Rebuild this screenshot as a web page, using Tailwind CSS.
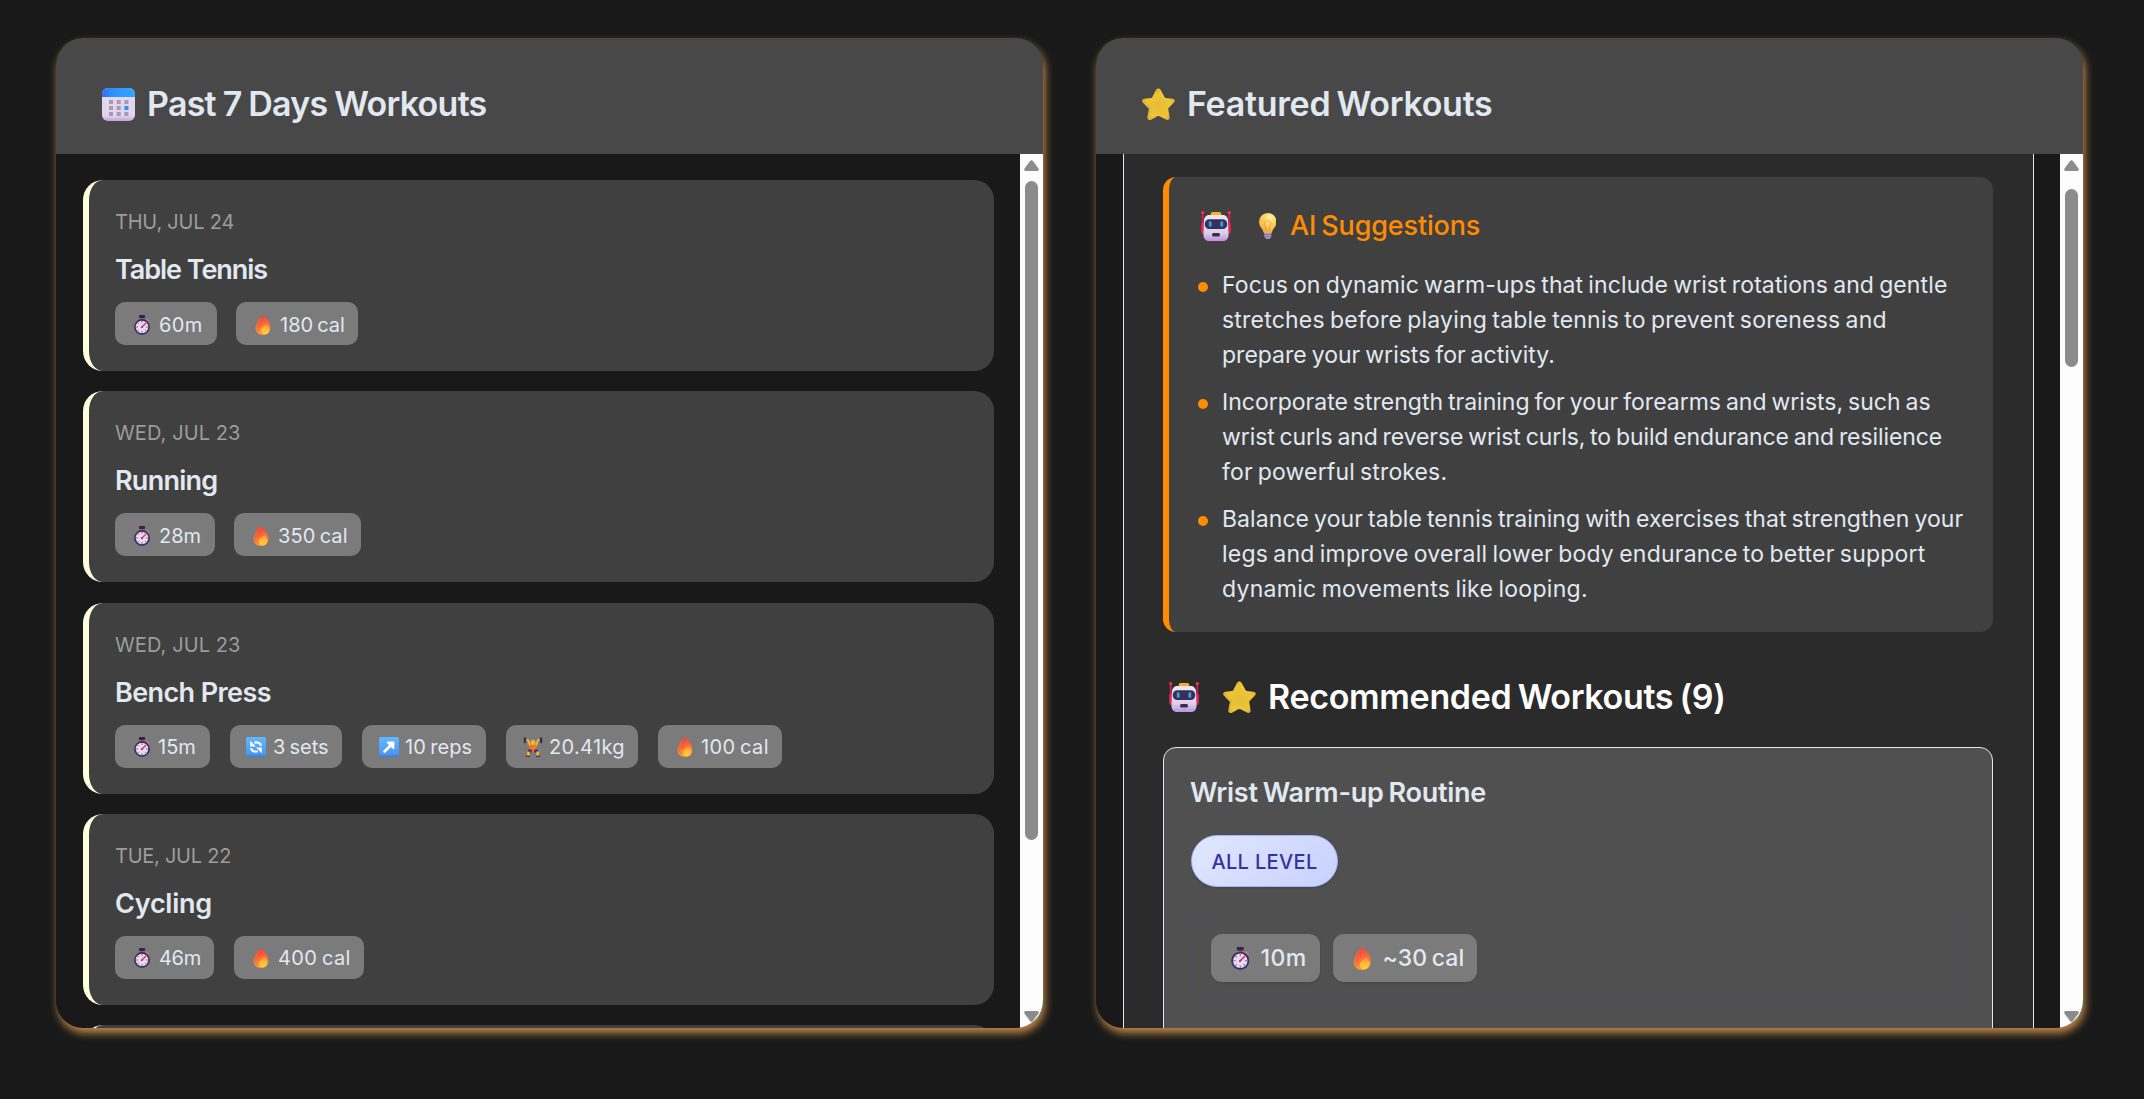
<!DOCTYPE html>
<html lang="en">
<head>
<meta charset="utf-8">
<title>Workouts</title>
<script src="https://cdn.jsdelivr.net/npm/@tailwindcss/browser@4"></script>
</head>
<body class="h-[1099px] w-[2144px] overflow-hidden bg-[#191919] font-['Inter',sans-serif] text-slate-200">

<!-- icon sprite -->
<svg class="absolute size-0" aria-hidden="true">
  <defs>
    <linearGradient id="calTop" x1="0" x2="1" y1="0" y2="0"><stop offset="0" stop-color="#2f6df0"/><stop offset=".3" stop-color="#3190ff"/><stop offset="1" stop-color="#31a5ff"/></linearGradient>
    <linearGradient id="calBody" x1="0" x2="0" y1="0" y2="1"><stop offset="0" stop-color="#e3daec"/><stop offset=".85" stop-color="#e2d3ee"/><stop offset="1" stop-color="#c2a0dc"/></linearGradient>
    <radialGradient id="starFill" cx=".5" cy=".55" r=".55"><stop offset="0" stop-color="#e2be38"/><stop offset=".7" stop-color="#efc536"/><stop offset="1" stop-color="#dda52f"/></radialGradient>
    <linearGradient id="botHead" x1="0" x2="0" y1="0" y2="1"><stop offset="0" stop-color="#eee6f4"/><stop offset=".7" stop-color="#dccfe8"/><stop offset="1" stop-color="#bb92dd"/></linearGradient>
    <radialGradient id="bulbFill" cx=".62" cy=".25" r=".75"><stop offset="0" stop-color="#fff6c4"/><stop offset=".35" stop-color="#ffdc68"/><stop offset="1" stop-color="#f5a742"/></radialGradient>
    <linearGradient id="flameOut" x1="0" x2="0" y1="0" y2="1"><stop offset="0" stop-color="#f5413f"/><stop offset=".5" stop-color="#f9713c"/><stop offset="1" stop-color="#ff9a36"/></linearGradient>
    <linearGradient id="flameIn" x1="0" x2="0" y1="0" y2="1"><stop offset="0" stop-color="#ff8a38"/><stop offset=".5" stop-color="#ffb536"/><stop offset="1" stop-color="#ffd23a"/></linearGradient>
    <linearGradient id="tile" x1="0" x2="0" y1="0" y2="1"><stop offset="0" stop-color="#62b8ff"/><stop offset=".85" stop-color="#4c97f2"/><stop offset="1" stop-color="#3f78d8"/></linearGradient>
    <linearGradient id="rim" x1="0" x2="0" y1="0" y2="1"><stop offset="0" stop-color="#4f2450"/><stop offset="1" stop-color="#35336c"/></linearGradient>
  </defs>
  <symbol id="calendar" viewBox="0 0 33 33">
    <rect width="33" height="33" rx="6" fill="url(#calBody)"/>
    <path d="M0 9V6a6 6 0 0 1 6-6h21a6 6 0 0 1 6 6v3z" fill="url(#calTop)"/>
    <path d="M7 12h4v4H7zM14.700 12h4v4h-4zM22.400 12h4v4h-4zM7 18h4v4H7zM14.700 18h4v4h-4zM7 24h4v4H7zM14.700 24h4v4h-4zM22.400 24h4v4h-4z" fill="#a79ab3"/>
    <path d="M22.400 18h4v4h-4z" fill="#2f93f5"/>
  </symbol>
  <symbol id="star" viewBox="0 0 33 33">
    <path d="M14 1.700q2.300-3 4.600 0l3.800 7.200q.4.800 1.300 1l7.200.9q3 .9 1.300 3.500l-5.400 5.500q-.7.700-.5 1.700l1.300 7.700q0 3.500-3.200 2.600l-6.900-3.500q-1.200-.5-2.300 0l-6.500 3.600q-3.400.9-3.400-2.600l1.500-7.700q.2-1-.6-1.700L.7 14.400q-1.600-2.700 1.300-3.600l7-.9q1-.2 1.400-1z" fill="url(#starFill)"/>
    <path d="M16.300 1.500q1.200 0 1.900 1.300l3.500 6.800q.6.900 1.700 1.200" fill="none" stroke="#f8d85a" stroke-width="1" stroke-linecap="round" opacity=".8"/>
    <path d="M2 13.500l5.500 5.200q.8.900.6 2.100L6.700 29" fill="none" stroke="#c98f25" stroke-width="1" stroke-linecap="round" opacity=".55"/>
  </symbol>
  <symbol id="robot" viewBox="0 0 30 30">
    <path d="M1.700 1.500v14M28.300 1.500v14" stroke="#d81e55" stroke-width="1.700"/>
    <circle cx="1.700" cy="1.600" r="1.600" fill="#f5305f"/><circle cx="28.300" cy="1.600" r="1.600" fill="#f5305f"/>
    <rect x=".2" y="11.500" width="5" height="11.500" rx="2.200" fill="#dc2a5e"/><rect x="24.800" y="11.500" width="5" height="11.500" rx="2.200" fill="#dc2a5e"/>
    <rect x="9.700" y="1" width="10.600" height="5" rx="1.800" fill="#f7b31e"/>
    <path d="M8 4h14c3 0 4.800 2.500 5 5.500l.5 14c0 4-2 6.500-5.500 6.500H8c-3.500 0-5.500-2.500-5.500-6.500L3 9.500C3.200 6.500 5 4 8 4z" fill="url(#botHead)"/>
    <rect x="3.800" y="8.200" width="22.400" height="9.800" rx="4.600" fill="#3c2f57"/>
    <rect x="7.800" y="10.200" width="2.800" height="5.800" rx="1.400" fill="#1fa5f5"/><rect x="19.400" y="10.200" width="2.800" height="5.800" rx="1.400" fill="#1fa5f5"/>
    <rect x="11" y="22" width="8" height="3.500" rx="1.500" fill="#392b51"/>
  </symbol>
  <symbol id="bulb" viewBox="0 0 17.500 26">
    <path d="M5.300 18h7v5.500q-.8 2.500-3.500 2.500t-3.500-2.500z" fill="#b3a2c4"/>
    <path d="M8.750 0a8.700 8.700 0 0 1 8.700 8.800c0 3.500-1.600 5.300-3 7.200-.8 1.200-1 2.100-1.300 3-.2.700-.6 1-1.300 1H5.600c-.7 0-1.100-.3-1.300-1-.3-.9-.5-1.800-1.300-3C1.600 14.100 0 12.300 0 8.800A8.750 8.750 0 0 1 8.750 0z" fill="url(#bulbFill)"/>
    <path d="M7.300 18.500l-1-5.300A3.300 3.300 0 1 1 11 13.200l-1 5.300" fill="none" stroke="#f0932e" stroke-width=".9"/>
    <path d="M5.300 21.500h7M5.700 23.600h6" stroke="#75608d" stroke-width=".8"/>
  </symbol>
  <symbol id="timer" viewBox="0 0 16 20">
    <rect x="7" y="2" width="2" height="4" fill="#6a5a7c"/>
    <rect x="5" y="0" width="6" height="3" rx=".7" fill="#3a1f4c"/>
    <path d="M13 4.300l1.600 1.700" stroke="#9b8aa8" stroke-width="1.400" stroke-linecap="round"/>
    <circle cx="8" cy="12" r="7.100" fill="#e6dcef" stroke="url(#rim)" stroke-width="1.700"/>
    <path d="M8 6v2M8 16v2M2 12h2M12 12h2M3.800 7.800l1.300 1.300M10.900 14.900l1.300 1.300M3.800 16.200l1.300-1.300" stroke="#7d6c90" stroke-width=".9"/>
    <path d="M7.600 12.400L11.700 8.200" stroke="#ee2f68" stroke-width="1.500" stroke-linecap="round"/>
    <circle cx="8" cy="12" r="1" fill="#b3356b"/>
  </symbol>
  <symbol id="fire" viewBox="0 0 16 20">
    <path d="M8.800 0C7.200.8 6 2 5.300 3.600 5.200 3 5.300 2.600 5.400 2 3.500 3.600 2.700 5.400 2.700 7.200 1.300 8.600.6 11 .6 13.300.6 17.300 3.800 20 8 20s7.400-2.800 7.400-7c0-3-.8-5.600-2.300-7.600C11.800 3.600 9.800 2.600 8.800 0z" fill="url(#flameOut)"/>
    <path d="M3 9C2 11.500 2 14 3.500 17M5.700 5C4.300 7.500 4 10 4.500 13M8 3C6.500 5.500 6.300 8 6.800 10" fill="none" stroke="#d9482e" stroke-width=".6" opacity=".7"/>
    <path d="M11.300 8c-.2 2-2 2.600-3.700 4.200-1.200 1-1.900 2.300-1.700 3.900.2 1.900 1.600 3.300 3.600 3.300 3 0 5-2.100 5-5.400 0-2.600-2.500-3.600-3.200-6z" fill="url(#flameIn)"/>
  </symbol>
  <symbol id="sets" viewBox="0 0 20 20">
    <rect width="20" height="20" rx="1.800" fill="url(#tile)"/>
    <path d="M15 8.800C14.500 5.800 11 4.800 8.300 5.800M5 11.200c.5 3 4 4 6.700 3" fill="none" stroke="#fff" stroke-width="2.200"/>
    <path d="M4.200 3.800v5.700h5.700zM15.800 16.200v-5.700h-5.700z" fill="#fff"/>
  </symbol>
  <symbol id="reps" viewBox="0 0 20 20">
    <rect width="20" height="20" rx="1.800" fill="url(#tile)"/>
    <path d="M5.500 14.500L12 8" stroke="#fff" stroke-width="2.800" stroke-linecap="round"/>
    <path d="M8.500 4.600h5.900q1 0 1 1v5.900q-.2 1.300-1.300.5L8 6q-.8-1.100.5-1.400z" fill="#fff"/>
  </symbol>
  <symbol id="lifter" viewBox="0 0 20 20">
    <path d="M1 3h18" stroke="#8d8796" stroke-width=".8"/>
    <rect x=".8" y=".2" width="2.200" height="6" rx="1" fill="#3b3050"/><rect x="17" y=".2" width="2.200" height="6" rx="1" fill="#3b3050"/>
    <path d="M4.800 3L7 8.500M15.200 3L13 8.500" stroke="#f8b820" stroke-width="2" stroke-linecap="round"/>
    <circle cx="10" cy="5.600" r="2.600" fill="#f9b024"/>
    <path d="M6.300 8.200h7.400l-.8 6H7.100z" fill="#f7702c"/>
    <path d="M5.200 12.500h3.600l-.3 3H4.700zM14.800 12.500h-3.600l.3 3h3.800z" fill="#4b2a63"/>
    <rect x="4.200" y="14.500" width="2.300" height="4" fill="#fcc81f"/><rect x="13.500" y="14.500" width="2.300" height="4" fill="#fcc81f"/>
    <path d="M3 19.400h3.700M13.300 19.400H17" stroke="#4b2a63" stroke-width="1.300"/>
  </symbol>
  <symbol id="arrow" viewBox="0 0 15 11">
    <path d="M6 1q1.500-1.700 3 0l5.500 7.600Q15.500 11 13 11H2Q-.5 11 .5 8.600z" fill="#8b8b8b"/>
  </symbol>
</svg>

<main class="flex gap-[53px] pt-[38px] pl-[56px]">

  <!-- history -->
  <section class="flex h-[990px] w-[987px] flex-col overflow-hidden rounded-[27px] bg-[#191919] shadow-[2px_5px_8px_rgba(255,180,92,0.72)]">
    <header class="flex h-[116px] shrink-0 items-center gap-[12px] bg-[#484848] pt-[16px] pl-[46px]">
      <svg class="size-[33px]"><use href="#calendar"/></svg>
      <h2 class="pb-[2px] text-[34px] font-semibold tracking-[-0.75px] whitespace-nowrap [word-spacing:-1px]">Past 7 Days Workouts</h2>
    </header>
    <div class="flex min-h-0 flex-1">
      <div class="flex flex-1 flex-col gap-[20.3px] overflow-hidden pt-[26px] pr-[26px] pl-[27px]">
        <article class="h-[191px] shrink-0 rounded-[20px] border-l-6 border-[#ffffe0] bg-[#404040] pt-[26px] pl-[26px]">
          <p class="text-[20px] leading-8 tracking-[-0.2px] text-[#9c9c9c]">THU, JUL 24</p>
          <h3 class="mt-[14px] text-[27px] leading-9 font-semibold tracking-[-1.05px]">Table Tennis</h3>
          <div class="mt-[14px] flex gap-[19px] text-[20px]">
            <span class="flex h-[43px] w-[102px] items-center gap-[9px] rounded-[10px] bg-[#7b7b7b] pl-[19px]"><svg class="h-5 w-4 translate-y-px"><use href="#timer"/></svg><span class="pt-[2px] tracking-[0.4px]">60m</span></span>
            <span class="flex h-[43px] w-[122px] items-center gap-[9px] rounded-[10px] bg-[#7b7b7b] pl-[19px]"><svg class="h-5 w-4 translate-y-px"><use href="#fire"/></svg><span class="pt-[2px] [word-spacing:-1.5px]">180 cal</span></span>
          </div>
        </article>
        <article class="h-[191px] shrink-0 rounded-[20px] border-l-6 border-[#ffffe0] bg-[#404040] pt-[26px] pl-[26px]">
          <p class="text-[20px] leading-8 tracking-[0.1px] text-[#9c9c9c]">WED, JUL 23</p>
          <h3 class="mt-[14px] text-[27px] leading-9 font-semibold tracking-[-0.75px]">Running</h3>
          <div class="mt-[14px] flex gap-[19px] text-[20px]">
            <span class="flex h-[43px] w-[100px] items-center gap-[9px] rounded-[10px] bg-[#7b7b7b] pl-[19px]"><svg class="h-5 w-4 translate-y-px"><use href="#timer"/></svg><span class="pt-[2px]">28m</span></span>
            <span class="flex h-[43px] w-[127px] items-center gap-[9px] rounded-[10px] bg-[#7b7b7b] pl-[19px]"><svg class="h-5 w-4 translate-y-px"><use href="#fire"/></svg><span class="pt-[2px] tracking-[0.1px] [word-spacing:-1.5px]">350 cal</span></span>
          </div>
        </article>
        <article class="h-[191px] shrink-0 rounded-[20px] border-l-6 border-[#ffffe0] bg-[#404040] pt-[26px] pl-[26px]">
          <p class="text-[20px] leading-8 tracking-[0.1px] text-[#9c9c9c]">WED, JUL 23</p>
          <h3 class="mt-[14px] text-[27px] leading-9 font-semibold tracking-[-0.6px]">Bench Press</h3>
          <div class="mt-[14px] flex gap-5 text-[20px]">
            <span class="flex h-[43px] w-[95px] items-center gap-[8px] rounded-[10px] bg-[#7b7b7b] pl-[19px]"><svg class="h-5 w-4 translate-y-px"><use href="#timer"/></svg><span class="pt-[2px]">15m</span></span>
            <span class="flex h-[43px] w-[112px] items-center gap-[7px] rounded-[10px] bg-[#7b7b7b] pl-4"><svg class="size-5 translate-y-px"><use href="#sets"/></svg><span class="pt-[2px] [word-spacing:-1.5px]">3 sets</span></span>
            <span class="flex h-[43px] w-[124px] items-center gap-[6px] rounded-[10px] bg-[#7b7b7b] pl-[17px]"><svg class="size-5 translate-y-px"><use href="#reps"/></svg><span class="pt-[2px] tracking-[0.1px] [word-spacing:-1.5px]">10 reps</span></span>
            <span class="flex h-[43px] w-[132px] items-center gap-[6px] rounded-[10px] bg-[#7b7b7b] pl-[17px]"><svg class="size-5 translate-y-px"><use href="#lifter"/></svg><span class="pt-[2px] tracking-[0.35px]">20.41kg</span></span>
            <span class="flex h-[43px] w-[124px] items-center gap-[8px] rounded-[10px] bg-[#7b7b7b] pl-[19px]"><svg class="h-5 w-4 translate-y-px"><use href="#fire"/></svg><span class="pt-[2px] tracking-[0.4px] [word-spacing:-1.5px]">100 cal</span></span>
          </div>
        </article>
        <article class="h-[191px] shrink-0 rounded-[20px] border-l-6 border-[#ffffe0] bg-[#404040] pt-[26px] pl-[26px]">
          <p class="text-[20px] leading-8 tracking-[-0.25px] text-[#9c9c9c]">TUE, JUL 22</p>
          <h3 class="mt-[14px] text-[27px] leading-9 font-semibold tracking-[-0.25px]">Cycling</h3>
          <div class="mt-[14px] flex gap-5 text-[20px]">
            <span class="flex h-[43px] w-[99px] items-center gap-[9px] rounded-[10px] bg-[#7b7b7b] pl-[19px]"><svg class="h-5 w-4 translate-y-px"><use href="#timer"/></svg><span class="pt-[2px] tracking-[-0.3px]">46m</span></span>
            <span class="flex h-[43px] w-[130px] items-center gap-[9px] rounded-[10px] bg-[#7b7b7b] pl-[19px]"><svg class="h-5 w-4 translate-y-px"><use href="#fire"/></svg><span class="pt-[2px] tracking-[0.4px] [word-spacing:-1.5px]">400 cal</span></span>
          </div>
        </article>
        <article class="h-[191px] shrink-0 rounded-[20px] border-l-6 border-[#ffffe0] bg-[#404040]"></article>
      </div>
      <!-- scrollbar -->
      <div class="flex w-[23px] flex-col items-center bg-[#fcfcfc] pt-[6px] pb-[6px]">
        <svg class="h-[11px] w-[15px]"><use href="#arrow"/></svg>
        <div class="mt-[10px] h-[659px] w-[13px] rounded-full bg-[#8b8b8b]"></div>
        <svg class="mt-auto h-[11px] w-[15px] rotate-180"><use href="#arrow"/></svg>
      </div>
    </div>
  </section>

  <!-- featured -->
  <section class="flex h-[990px] w-[987px] flex-col overflow-hidden rounded-[27px] bg-[#191919] shadow-[2px_5px_8px_rgba(255,180,92,0.72)]">
    <header class="flex h-[116px] shrink-0 items-center gap-[12px] bg-[#484848] pt-[16px] pl-[46px]">
      <svg class="size-[33px]"><use href="#star"/></svg>
      <h2 class="pb-[2px] text-[34px] font-semibold tracking-[-0.3px] whitespace-nowrap [word-spacing:-2px]">Featured Workouts</h2>
    </header>
    <div class="flex min-h-0 flex-1">
      <div class="flex-1 overflow-hidden pr-[26px] pl-[27px]">
        <div class="h-full border-x border-slate-200 bg-[#2b2b2b] pt-[23px] pr-10 pl-[39px]">

          <div class="h-[455px] rounded-[13px] border-l-6 border-[#ff8c00] bg-[#404040] pt-[31px] pl-[29px]">
            <h3 class="flex h-9 items-center pl-[3px] text-[27px] font-medium text-[#ff8c00]">
              <svg class="size-[30px]"><use href="#robot"/></svg>
              <svg class="ml-[27.5px] h-[26px] w-[17.500px]"><use href="#bulb"/></svg>
              <span class="ml-[14px] tracking-[-0.15px] [word-spacing:-2px]">AI Suggestions</span>
            </h3>
            <ul class="mt-[24px] flex flex-col gap-[12.2px] text-[23px] leading-[35px] whitespace-nowrap [word-spacing:-1.5px]">
              <li class="flex gap-[14px]"><i class="mt-[14px] size-[10px] rounded-full bg-[#ff8c00]"></i>
                <p><span class="tracking-[0.11px]">Focus on dynamic warm-ups that include wrist rotations and gentle</span><br>
                <span class="tracking-[0.21px]">stretches before playing table tennis to prevent soreness and</span><br>
                <span class="tracking-[0.01px]">prepare your wrists for activity.</span></p></li>
              <li class="flex gap-[14px]"><i class="mt-[14px] size-[10px] rounded-full bg-[#ff8c00]"></i>
                <p><span>Incorporate strength training for your forearms and wrists, such as</span><br>
                <span class="tracking-[-0.09px]">wrist curls and reverse wrist curls, to build endurance and resilience</span><br>
                <span class="tracking-[0.14px]">for powerful strokes.</span></p></li>
              <li class="flex gap-[14px]"><i class="mt-[14px] size-[10px] rounded-full bg-[#ff8c00]"></i>
                <p><span class="tracking-[0.07px]">Balance your table tennis training with exercises that strengthen your</span><br>
                <span class="tracking-[0.22px]">legs and improve overall lower body endurance to better support</span><br>
                <span class="tracking-[0.28px]">dynamic movements like looping.</span></p></li>
            </ul>
          </div>

          <h2 class="mt-[42px] flex h-11 items-center pl-[6px] text-[34px] font-semibold text-white">
            <svg class="mt-[2px] size-[30px]"><use href="#robot"/></svg>
            <svg class="mt-[2px] ml-[24px] size-[33px]"><use href="#star"/></svg>
            <span class="ml-[12px] tracking-[-0.33px] whitespace-nowrap [word-spacing:-2px]">Recommended Workouts (9)</span>
          </h2>

          <div class="mt-[29px] h-[400px] rounded-[13px] border border-slate-200 bg-[#505050] px-[27px] pt-[27px] shadow-md">
            <h3 class="-ml-px text-[27px] leading-9 font-semibold tracking-[-0.28px] [word-spacing:-1.5px]">Wrist Warm-up Routine</h3>
            <div class="mt-[24px] flex h-[52px] w-[147px] items-center justify-center rounded-full border border-indigo-300 bg-[linear-gradient(135deg,#e0e7ff,#c7d2fe)] pt-px text-[20px] font-medium tracking-[0.35px] text-[#3730a3] shadow-sm">ALL LEVEL</div>
            <div class="mt-[26px] flex h-[90px] items-center gap-[13px] rounded-[20px] border border-[#4b5163] pl-[19px] text-[23px] font-medium">
              <span class="flex h-[48px] w-[109px] items-center gap-[11px] rounded-[11px] bg-[#7b7b7b] pl-5 shadow-sm"><svg class="h-[23px] w-[18.500px]"><use href="#timer"/></svg><span class="pt-px tracking-[0.4px]">10m</span></span>
              <span class="flex h-[48px] w-[144px] items-center gap-[11px] rounded-[11px] bg-[#7b7b7b] pl-5 shadow-sm"><svg class="h-[23px] w-[18.500px]"><use href="#fire"/></svg><span class="pt-px tracking-[0.15px] [word-spacing:-2px]">~30 cal</span></span>
            </div>
          </div>
        </div>
      </div>
      <!-- scrollbar -->
      <div class="flex w-[23px] flex-col items-center bg-[#fcfcfc] pt-[6px] pb-[6px]">
        <svg class="h-[11px] w-[15px]"><use href="#arrow"/></svg>
        <div class="mt-[18px] h-[178px] w-[13px] rounded-full bg-[#8b8b8b]"></div>
        <svg class="mt-auto h-[11px] w-[15px] rotate-180"><use href="#arrow"/></svg>
      </div>
    </div>
  </section>
</main>
</body>
</html>
